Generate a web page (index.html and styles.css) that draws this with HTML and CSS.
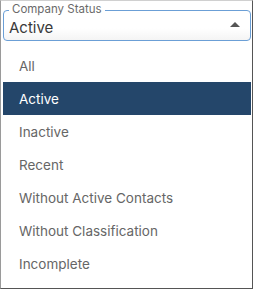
FILE: index.html
```html
<!DOCTYPE html>
<html>
<head>
<meta charset="utf-8">
<link rel="stylesheet" href="styles.css">
</head>
<body>
<div class="frame">
  <div class="select">
    <span class="label">Company Status</span>
    <span class="value">Active</span>
    <span class="arrow"></span>
  </div>
  <ul class="menu">
    <li class="item">All</li>
    <li class="item selected">Active</li>
    <li class="item">Inactive</li>
    <li class="item">Recent</li>
    <li class="item">Without Active Contacts</li>
    <li class="item">Without Classification</li>
    <li class="item">Incomplete</li>
  </ul>
</div>
</body>
</html>
```
FILE: styles.css
```css
html, body {
  margin: 0;
  padding: 0;
  background: #fff;
}
.frame {
  box-sizing: border-box;
  width: 253px;
  height: 289px;
  border-left: 1px solid #9a9a9a;
  border-top: 1px solid #d0d0d0;
  border-right: 1px solid #555;
  border-bottom: 1px solid #555;
  padding: 9px 1px 0 2px;
  font-family: Inter, "Noto Sans", sans-serif;
  overflow: hidden;
  display: flex;
  flex-direction: column;
}
.select {
  position: relative;
  box-sizing: border-box;
  height: 31px;
  border: 1px solid #6b9fd6;
  border-radius: 4px;
  background: linear-gradient(#fff 60%, #f4f4f4);
  display: flex;
  align-items: center;
  padding: 4px 10px 0 5px;
}
.label {
  position: absolute;
  left: 5px;
  top: -8px;
  padding: 0 3px;
  background: #fff;
  font-size: 11.5px;
  line-height: 13px;
  color: #6a6a6a;
}
.value {
  flex: 1;
  font-size: 15px;
  color: #3a3a3a;
}
.arrow {
  width: 0;
  height: 0;
  border-left: 5px solid transparent;
  border-right: 5px solid transparent;
  border-bottom: 5px solid #555;
  margin-top: -6px;
}
.menu {
  list-style: none;
  margin: 8px 0 0 0;
  padding: 0;
  background: #fff;
}
.item {
  height: 33px;
  display: flex;
  align-items: center;
  padding-left: 16px;
  font-size: 13.5px;
  color: #666;
}
.item.selected {
  background: #24466a;
  color: #fff;
}
```
